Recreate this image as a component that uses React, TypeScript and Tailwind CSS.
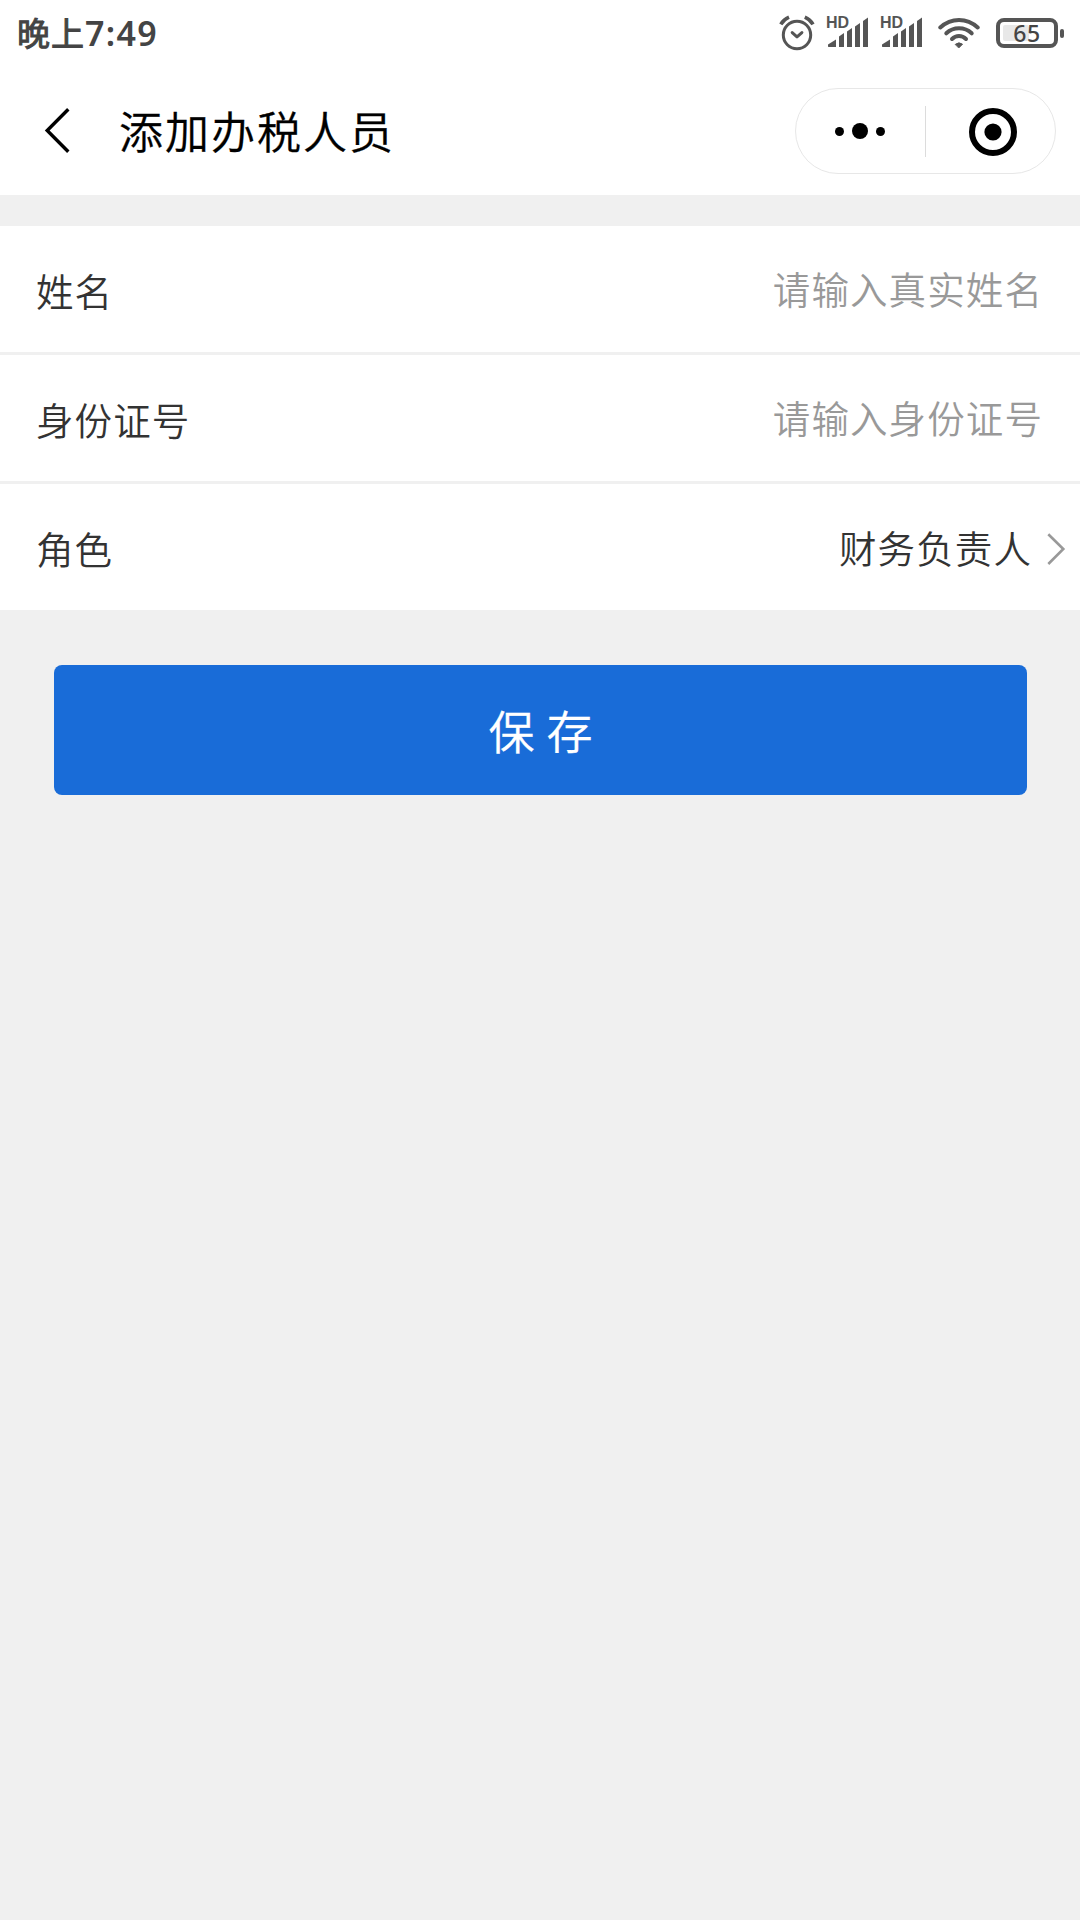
import React from "react";

function AlarmIcon() {
  return (
    <svg width="36" height="36" viewBox="0 0 36 36" fill="none" stroke="#555" strokeLinecap="round" strokeLinejoin="round">
      <circle cx="18" cy="20" r="13.7" strokeWidth="3" />
      <path d="M13.2 17.6l4.8 4.3 4.9-4.3" strokeWidth="3" />
      <path d="M1.8 9.4Q4.6 4.5 10 2.2M34 9.4Q31.200 4.500 25.800 2.200" strokeWidth="3.600" strokeLinecap="butt" />
    </svg>
  );
}

function SignalIcon() {
  return (
    <div className="relative h-8 w-[42px]">
      <span className="absolute left-[-2px] top-[-1px] font-['Liberation_Sans'] text-[16px] leading-[15px] font-bold text-[#555]">
        HD
      </span>
      <svg className="absolute left-0 top-0" width="42" height="32" viewBox="0 0 42 32" fill="#555">
        <path d="M0 28.500l8-5V31H.5Q-1 30 0 28.500Z" />
        <path d="M11 20.500l5-3.500V31h-5Z" />
        <path d="M19 15.500l5-3.500V31h-5Z" />
        <path d="M27 10.500l5-3.500V31h-5Z" />
        <path d="M35 5l5-3.500V31h-5Z" />
      </svg>
    </div>
  );
}

function WifiIcon() {
  return (
    <svg width="42" height="32" viewBox="0 0 42 32" fill="none" stroke="#555" strokeWidth="4" strokeLinecap="round">
      <path d="M2.300 10.500Q10.500 3 21 3T39.700 10.500" />
      <path d="M8.300 16.300Q13.700 11.300 21 11.300T33.700 16.300" />
      <path d="M14 22Q17 19 21 19T28 22" />
      <path d="M17.500 27.200Q21 24.400 24.500 27.200L21 30.700Z" fill="#555" stroke="#555" strokeWidth="1" strokeLinejoin="round" />
    </svg>
  );
}

function Battery() {
  return (
    <div className="flex items-center">
      <div className="relative flex h-[30px] w-[62px] items-center justify-center rounded-[8px] border-4 border-[#555]">
        <div className="absolute left-[3px] top-[3px] h-4 w-[26px] rounded-[2px] bg-[#e8e8e8]" />
        <span className="relative font-['Noto_Sans'] text-[23px] leading-[22px] font-medium tracking-[0.500px] text-[#444]">65</span>
      </div>
      <div className="ml-[2px] h-[9px] w-1 rounded-[2px] bg-[#555]" />
    </div>
  );
}

function StatusBar() {
  return (
    <div className="flex h-[66px] items-start justify-between pl-[17px] pr-4">
      <div className="flex pt-[9px] leading-[48px] text-[#444]">
        <span className="-mt-px text-[33px] tracking-[1px] [-webkit-text-stroke:1px_#444]">晚上</span>
        <span className="font-['Noto_Sans'] text-[34px] font-semibold tracking-[1.300px]">7:49</span>
      </div>
      <div className="flex">
        <div className="mt-[15px] w-[49px]"><AlarmIcon /></div>
        <div className="mt-4 w-[54px]"><SignalIcon /></div>
        <div className="mt-4 w-[56px]"><SignalIcon /></div>
        <div className="mt-[17px] w-[58px]"><WifiIcon /></div>
        <div className="mt-[18px]"><Battery /></div>
      </div>
    </div>
  );
}

function TitleBar() {
  return (
    <header className="flex h-[129px] items-start">
      <svg className="ml-11 mt-[41px]" width="28" height="48" viewBox="0 0 28 48" fill="none" stroke="#000" strokeWidth="3.400">
        <path d="M24.300 2.300L3.200 23.500L24.300 44.800" />
      </svg>
      <h1 className="ml-[47px] mt-[34px] grow text-[44px] leading-[60px] font-[350] tracking-[2px] text-black [-webkit-text-stroke:0.300px_#000]">添加办税人员</h1>
      <div className="mr-6 mt-[22px] flex h-[86px] w-[261px] items-center rounded-full border border-[#e7e7e7]">
        <button className="flex w-[129px] items-center justify-center gap-2 pr-[2px]" aria-label="更多">
          <i className="size-[9px] rounded-full bg-black" />
          <i className="size-4 rounded-full bg-black" />
          <i className="size-[9px] rounded-full bg-black" />
        </button>
        <div className="h-[51px] w-px bg-[#dcdcdc]" />
        <button className="ml-[43px] mt-[2px] flex size-12 items-center justify-center rounded-full border-[6px] border-black" aria-label="关闭">
          <svg width="18" height="18" viewBox="0 0 18 18"><circle cx="9" cy="9" r="8.600" /></svg>
        </button>
      </div>
    </header>
  );
}

function Row({ label, children }: { label: string; children: React.ReactNode }) {
  return (
    <div className="flex h-[126px] items-center justify-between bg-white pl-9 text-[37.500px] leading-[54px] font-[350] tracking-[1.100px] text-[#333]">
      <span className="mt-[2px]">{label}</span>
      {children}
    </div>
  );
}

export default function App() {
  return (
    <div className="min-h-[1920px] w-[1080px] bg-[#f0f0f0] font-['Noto_Sans_CJK_SC',sans-serif]">
      <div className="bg-white">
        <StatusBar />
        <TitleBar />
      </div>
      <main className="mt-[31px]">
        <div className="flex flex-col gap-[3px]">
          <Row label="姓名">
            <span className="-mt-[3px] mr-[37px] text-[#999]">请输入真实姓名</span>
          </Row>
          <Row label="身份证号">
            <span className="-mt-[3px] mr-[37px] text-[#999]">请输入身份证号</span>
          </Row>
          <Row label="角色">
            <div className="mr-[14px] flex items-center">
              <span>财务负责人</span>
              <svg className="ml-[14px] mt-[3px]" width="20" height="34" viewBox="0 0 20 34" fill="none" stroke="#999" strokeWidth="2.600">
                <path d="M2.300 2.200L17.300 17L2.300 32" />
              </svg>
            </div>
          </Row>
        </div>
        <button className="mx-[54px] mt-[55px] flex h-[130px] w-[973px] items-center justify-center rounded-[8px] bg-[#196cd8] text-[46px] leading-[66px] font-[350] text-white [-webkit-text-stroke:0.300px_#fff]">
          <span className="-mt-[2px]">保</span>
          <span className="-mt-[2px] ml-3">存</span>
        </button>
      </main>
    </div>
  );
}
